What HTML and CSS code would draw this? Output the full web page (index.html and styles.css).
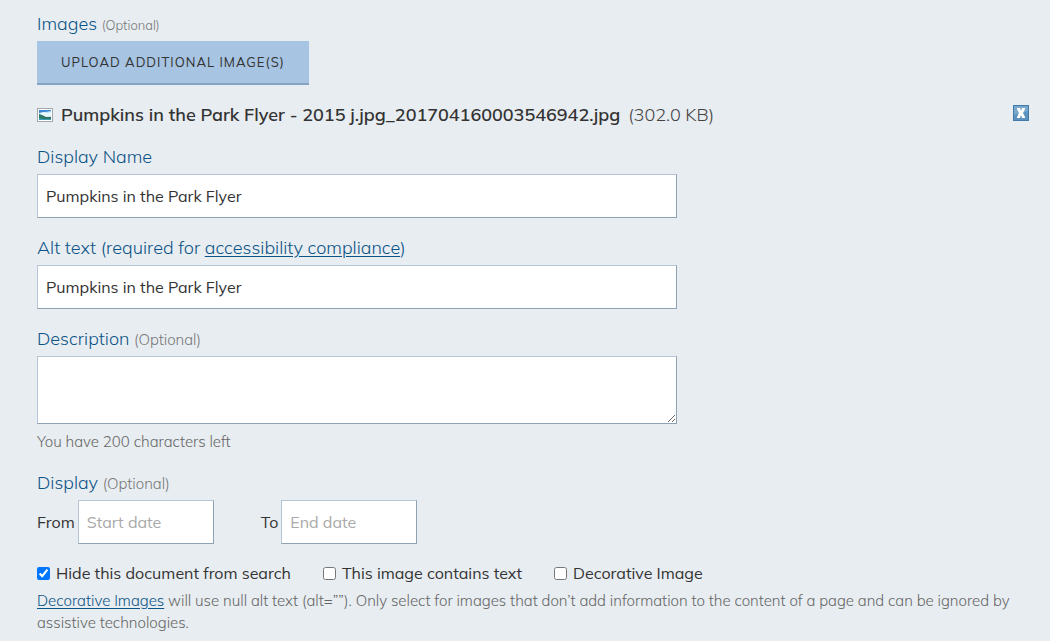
FILE: index.html
```
<!DOCTYPE html>
<html lang="en">
<head>
    <meta charset="UTF-8">
    <meta name="viewport" content="width=device-width, initial-scale=1.0">
    <title>Images</title>
    <link rel="stylesheet" href="styles.css">
</head>
<body>
    <form class="image-form">
        <div class="field">
            <div class="label">Images <span class="optional small">(Optional)</span></div>
            <button type="button" class="upload">Upload Additional Image(s)</button>
        </div>

        <div class="file-row">
            <svg class="file-icon" width="16" height="14" viewBox="0 0 16 14" aria-hidden="true">
                <rect x="0.5" y="0.5" width="15" height="13" fill="#fff" stroke="#a3a6aa"/>
                <rect x="2" y="2" width="12" height="10" fill="#b9def5"/>
                <path d="M2 2h12v1L8 4 2 5z" fill="#3f87d4"/>
                <path d="M3 5l4-1 3 1 4-1v4l-5 1-5-2z" fill="#e9f6fc"/>
                <path d="M2 6l3 1 4 2 5 0v2H2z" fill="#2f7562"/>
                <path d="M2 10l5 1h7v1H2z" fill="#3a9cb4"/>
            </svg>
            <strong class="file-name">Pumpkins in the Park Flyer - 2015 j.jpg_201704160003546942.jpg</strong>
            <span class="file-size">(302.0 KB)</span>
            <button type="button" class="remove" aria-label="Remove">
                <svg width="16" height="16" viewBox="0 0 16 16">
                    <rect x="0.5" y="0.5" width="15" height="15" fill="#5b93be" stroke="#4179a8"/>
                    <path d="M1 1h14v5L1 10z" fill="#78a9cd"/>
                    <path d="M4 3h3l1 3 1-3h3v1l-2 4 2 4v1H9L8 10l-1 3H4v-1l2-4-2-4z" fill="#fff"/>
                </svg>
            </button>
        </div>

        <div class="field">
            <label class="label" for="displayName">Display Name</label>
            <input type="text" class="text-box" id="displayName" value="Pumpkins in the Park Flyer">
        </div>

        <div class="field">
            <label class="label" for="altText">Alt text (required for <a href="#">accessibility compliance</a>)</label>
            <input type="text" class="text-box" id="altText" value="Pumpkins in the Park Flyer">
        </div>

        <div class="field">
            <label class="label" for="description">Description <span class="optional">(Optional)</span></label>
            <textarea class="text-box description" id="description"></textarea>
            <p class="note">You have 200 characters left</p>
        </div>

        <div class="field">
            <div class="label">Display <span class="optional">(Optional)</span></div>
            <div class="dates">
                <div class="date">
                    <label for="startDate">From</label>
                    <input type="text" class="text-box date-box" id="startDate" placeholder="Start date">
                </div>
                <div class="date">
                    <label for="endDate">To</label>
                    <input type="text" class="text-box date-box" id="endDate" placeholder="End date">
                </div>
            </div>
        </div>

        <div class="checks">
            <label class="check"><input type="checkbox" checked> Hide this document from search</label>
            <label class="check"><input type="checkbox"> This image contains text</label>
            <label class="check"><input type="checkbox"> Decorative Image</label>
        </div>
        <p class="note"><a href="#">Decorative Images</a> will use null alt text (alt=””). Only select for images that don’t add information to the content of a page and can be ignored by assistive technologies.</p>
    </form>
</body>
</html>
```
FILE: styles.css
```
* {
    box-sizing: border-box;
}

body {
    margin: 0;
    background: #e8edf1;
    color: #333;
    font-family: Muli, Mulish, Lato, sans-serif;
    font-size: 16px;
    line-height: 20px;
}

a {
    color: #0c5487;
    text-underline-offset: 2px;
}

.image-form {
    padding: 14px 21px 7px 37px;
}

.field {
    margin-bottom: 20px;
}

.label {
    display: block;
    padding-bottom: 7px;
    color: #0c5487;
    font-size: 18px;
    font-weight: 300;
}

.optional {
    color: #777;
    font-size: 15px;
    line-height: 16px;
}

.optional.small {
    font-size: 13px;
}

.upload {
    display: block;
    height: 44px;
    padding: 0 24px;
    border: 0;
    border-bottom: 2px solid #86a3c3;
    background: #a7c4e2;
    color: #333;
    font-family: inherit;
    font-size: 13px;
    letter-spacing: 1px;
    text-transform: uppercase;
}

/* Uploaded file */
.file-row {
    display: flex;
    align-items: center;
    gap: 8px;
    margin-bottom: 22px;
    font-size: 18px;
}

.file-name {
    font-weight: 600;
}

.file-size {
    color: #444;
    font-weight: 300;
}

.remove {
    display: flex;
    align-self: flex-start;
    margin-left: auto;
    padding: 0;
    border: 0;
    background: none;
}

/* Inputs */
.text-box {
    display: block;
    width: 100%;
    max-width: 640px;
    height: 44px;
    margin: 0;
    padding: 0 8px;
    border: 1px solid;
    border-color: #b5c5d5 #8fa2b4 #8fa2b4 #b5c5d5;
    border-radius: 0;
    background: #fff;
    color: #333;
    font-family: inherit;
    font-size: 16px;
}

.text-box::placeholder {
    color: #a9a9a9;
}

.description {
    height: 68px;
    padding: 8px;
}

.note {
    margin: 7px 0 0;
    color: #666;
    font-size: 15px;
    font-weight: 300;
    line-height: 22px;
}

.dates {
    display: flex;
    gap: 47px;
}

.date {
    display: flex;
    align-items: center;
    gap: 3px;
}

.date-box {
    width: 136px;
}

/* Checkboxes */
.checks {
    display: flex;
    flex-wrap: wrap;
    gap: 32px;
    margin-top: -1px;
}

.check {
    display: flex;
    align-items: center;
    gap: 6px;
}

.check input {
    width: 13px;
    height: 13px;
    margin: 0;
}
```
